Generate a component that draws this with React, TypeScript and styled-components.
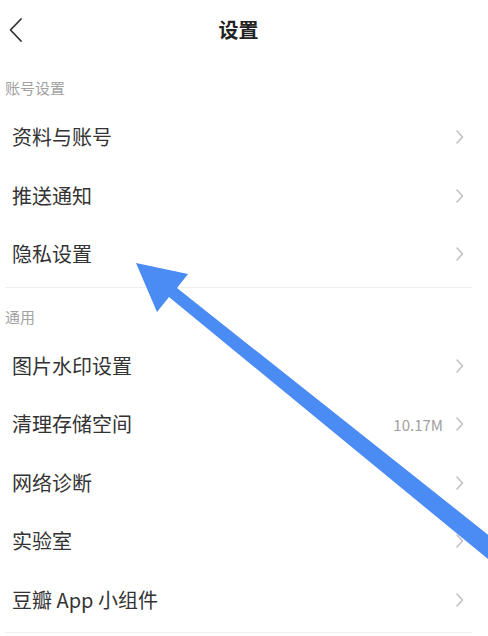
import React from 'react';
import styled, { createGlobalStyle } from 'styled-components';

type RowItem = {
  label: string;
  value?: string;
};

type Section = {
  title: string;
  items: RowItem[];
};

const sections: Section[] = [
  {
    title: '账号设置',
    items: [{ label: '资料与账号' }, { label: '推送通知' }, { label: '隐私设置' }],
  },
  {
    title: '通用',
    items: [
      { label: '图片水印设置' },
      { label: '清理存储空间', value: '10.17M' },
      { label: '网络诊断' },
      { label: '实验室' },
      { label: '豆瓣 App 小组件' },
    ],
  },
];

const GlobalStyle = createGlobalStyle`
  html, body {
    margin: 0;
    padding: 0;
    background: #ffffff;
  }
  body {
    font-family: "Noto Sans CJK SC", "Noto Sans", sans-serif;
    -webkit-font-smoothing: antialiased;
  }
`;

const Page = styled.div`
  position: relative;
  width: 488px;
  height: 636px;
  overflow: hidden;
  box-sizing: border-box;
  padding: 0 16px 0 5px;
  background: #ffffff;
`;

const Header = styled.div`
  display: grid;
  grid-template-columns: 1fr auto 1fr;
  align-items: center;
  height: 59px;
`;

const BackButton = styled.button`
  display: flex;
  align-items: center;
  justify-self: start;
  padding: 0 0 0 4px;
  border: none;
  background: transparent;
  cursor: pointer;
`;

const Title = styled.h1`
  margin: 0;
  font-size: 20px;
  font-weight: 600;
  color: #222222;
  line-height: 1;
`;

const SectionTitle = styled.div`
  height: 49px;
  box-sizing: border-box;
  padding-top: 19px;
  font-size: 15px;
  line-height: 20px;
  color: #a2a2a2;
`;

const Row = styled.div`
  display: flex;
  align-items: center;
  height: 58.5px;
  padding: 0 8px 0 7px;
  cursor: pointer;
`;

const RowLabel = styled.span`
  flex: 1;
  font-size: 20px;
  color: #333333;
  line-height: 1;
`;

const RowValue = styled.span`
  margin-right: 13px;
  font-size: 15px;
  color: #a0a0a0;
  line-height: 1;
`;

const Divider = styled.div`
  height: 1px;
  margin-top: 3px;
  background: #efefef;
`;

const ArrowOverlay = styled.svg`
  position: absolute;
  top: 0;
  left: 0;
  pointer-events: none;
`;

const BackIcon = () => (
  <svg width="16" height="26" viewBox="0 0 16 26">
    <polyline
      points="12,2 1.5,13 12,24"
      fill="none"
      stroke="#333333"
      strokeWidth="1.8"
      strokeLinecap="round"
      strokeLinejoin="round"
    />
  </svg>
);

const Chevron = () => (
  <svg width="8" height="14" viewBox="0 0 8 14">
    <polyline
      points="1,1 6.5,7 1,13"
      fill="none"
      stroke="#c2c2c2"
      strokeWidth="1.6"
      strokeLinecap="round"
      strokeLinejoin="round"
    />
  </svg>
);

const App = () => {
  return (
    <>
      <GlobalStyle />
      <Page>
        <Header>
          <BackButton aria-label="返回">
            <BackIcon />
          </BackButton>
          <Title>设置</Title>
          <span />
        </Header>

        {sections.map(section => (
          <div key={section.title}>
            <SectionTitle>{section.title}</SectionTitle>
            {section.items.map(item => (
              <Row key={item.label}>
                <RowLabel>{item.label}</RowLabel>
                {item.value && <RowValue>{item.value}</RowValue>}
                <Chevron />
              </Row>
            ))}
            <Divider />
          </div>
        ))}

        {/* annotation arrow drawn over the list */}
        <ArrowOverlay width="488" height="636" viewBox="0 0 488 636">
          <polygon
            points="136,263 188,274 177,288 496,541 488,559 169,297 157,312"
            fill="#4b8bf4"
          />
        </ArrowOverlay>
      </Page>
    </>
  );
};

export default App;
